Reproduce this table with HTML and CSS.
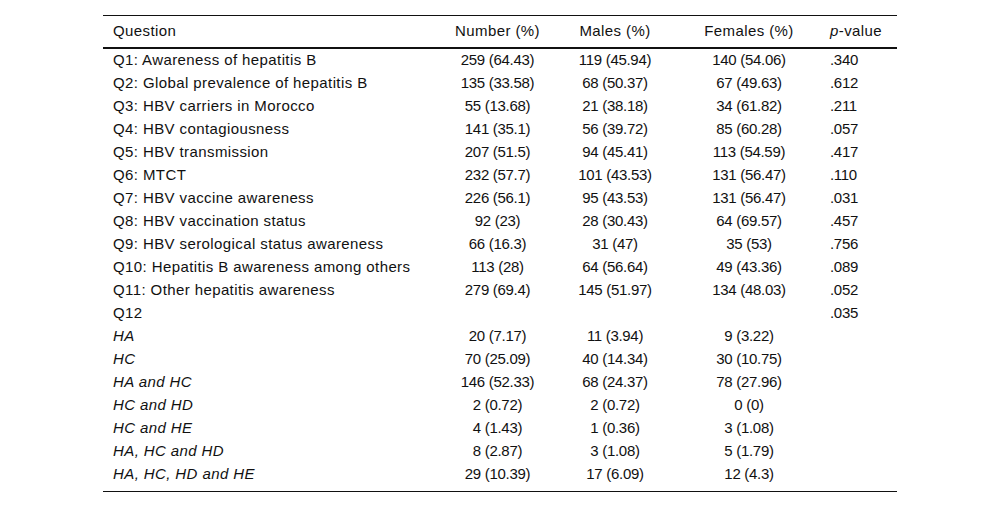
FILE: index.html
```html
<!DOCTYPE html>
<html lang="en">
<head>
<meta charset="utf-8">
<title>Hepatitis B awareness</title>
<link rel="stylesheet" href="styles.css">
</head>
<body>
<div class="wrap">
<table class="data">
  <colgroup>
    <col class="c-q"><col class="c-n"><col class="c-m"><col class="c-f"><col class="c-p">
  </colgroup>
  <thead>
    <tr><th class="q">Question</th><th>Number (%)</th><th>Males (%)</th><th>Females (%)</th><th class="p"><i>p</i>-value</th></tr>
  </thead>
  <tbody>
    <tr><td class="q">Q1: Awareness of hepatitis B</td><td>259 (64.43)</td><td>119 (45.94)</td><td>140 (54.06)</td><td class="p">.340</td></tr>
    <tr><td class="q">Q2: Global prevalence of hepatitis B</td><td>135 (33.58)</td><td>68 (50.37)</td><td>67 (49.63)</td><td class="p">.612</td></tr>
    <tr><td class="q">Q3: HBV carriers in Morocco</td><td>55 (13.68)</td><td>21 (38.18)</td><td>34 (61.82)</td><td class="p">.211</td></tr>
    <tr><td class="q">Q4: HBV contagiousness</td><td>141 (35.1)</td><td>56 (39.72)</td><td>85 (60.28)</td><td class="p">.057</td></tr>
    <tr><td class="q">Q5: HBV transmission</td><td>207 (51.5)</td><td>94 (45.41)</td><td>113 (54.59)</td><td class="p">.417</td></tr>
    <tr><td class="q">Q6: MTCT</td><td>232 (57.7)</td><td>101 (43.53)</td><td>131 (56.47)</td><td class="p">.110</td></tr>
    <tr><td class="q">Q7: HBV vaccine awareness</td><td>226 (56.1)</td><td>95 (43.53)</td><td>131 (56.47)</td><td class="p">.031</td></tr>
    <tr><td class="q">Q8: HBV vaccination status</td><td>92 (23)</td><td>28 (30.43)</td><td>64 (69.57)</td><td class="p">.457</td></tr>
    <tr><td class="q">Q9: HBV serological status awareness</td><td>66 (16.3)</td><td>31 (47)</td><td>35 (53)</td><td class="p">.756</td></tr>
    <tr><td class="q">Q10: Hepatitis B awareness among others</td><td>113 (28)</td><td>64 (56.64)</td><td>49 (43.36)</td><td class="p">.089</td></tr>
    <tr><td class="q">Q11: Other hepatitis awareness</td><td>279 (69.4)</td><td>145 (51.97)</td><td>134 (48.03)</td><td class="p">.052</td></tr>
    <tr><td class="q">Q12</td><td></td><td></td><td></td><td class="p">.035</td></tr>
    <tr><td class="q it">HA</td><td>20 (7.17)</td><td>11 (3.94)</td><td>9 (3.22)</td><td class="p"></td></tr>
    <tr><td class="q it">HC</td><td>70 (25.09)</td><td>40 (14.34)</td><td>30 (10.75)</td><td class="p"></td></tr>
    <tr><td class="q it">HA and HC</td><td>146 (52.33)</td><td>68 (24.37)</td><td>78 (27.96)</td><td class="p"></td></tr>
    <tr><td class="q it">HC and HD</td><td>2 (0.72)</td><td>2 (0.72)</td><td>0 (0)</td><td class="p"></td></tr>
    <tr><td class="q it">HC and HE</td><td>4 (1.43)</td><td>1 (0.36)</td><td>3 (1.08)</td><td class="p"></td></tr>
    <tr><td class="q it">HA, HC and HD</td><td>8 (2.87)</td><td>3 (1.08)</td><td>5 (1.79)</td><td class="p"></td></tr>
    <tr class="last"><td class="q it">HA, HC, HD and HE</td><td>29 (10.39)</td><td>17 (6.09)</td><td>12 (4.3)</td><td class="p"></td></tr>
  </tbody>
</table>
</div>
</body>
</html>
```

FILE: styles.css
```css
html, body {
  margin: 0;
  padding: 0;
  background: #ffffff;
}
body {
  font-family: "Liberation Sans", Arial, sans-serif;
  font-size: 15px;
  color: #111111;
}
.wrap {
  padding-top: 15px;
  padding-left: 103px;
}
.data {
  border-collapse: collapse;
  table-layout: fixed;
  width: 794px;
  border-top: 1px solid #111111;
  border-bottom: 1px solid #111111;
}
.c-q { width: 342px; }
.c-n { width: 105px; }
.c-m { width: 130px; }
.c-f { width: 138px; }
.c-p { width: 79px; }
.data th,
.data td {
  padding: 0 0 1px 0;
  text-align: center;
  font-weight: normal;
  white-space: nowrap;
  height: 22px;
  line-height: 22px;
  letter-spacing: -0.3px;
}
.data thead th {
  height: 30px;
  line-height: 30px;
  border-bottom: 2px solid #111111;
  letter-spacing: 0.4px;
}
.data .q {
  text-align: left;
  padding-left: 10px;
  letter-spacing: 0.4px;
}
.data .p {
  text-align: left;
  padding-left: 12px;
}
.data .it {
  font-style: italic;
}
.data tr.last td {
  height: 27px;
  line-height: 22px;
  vertical-align: top;
}
```
